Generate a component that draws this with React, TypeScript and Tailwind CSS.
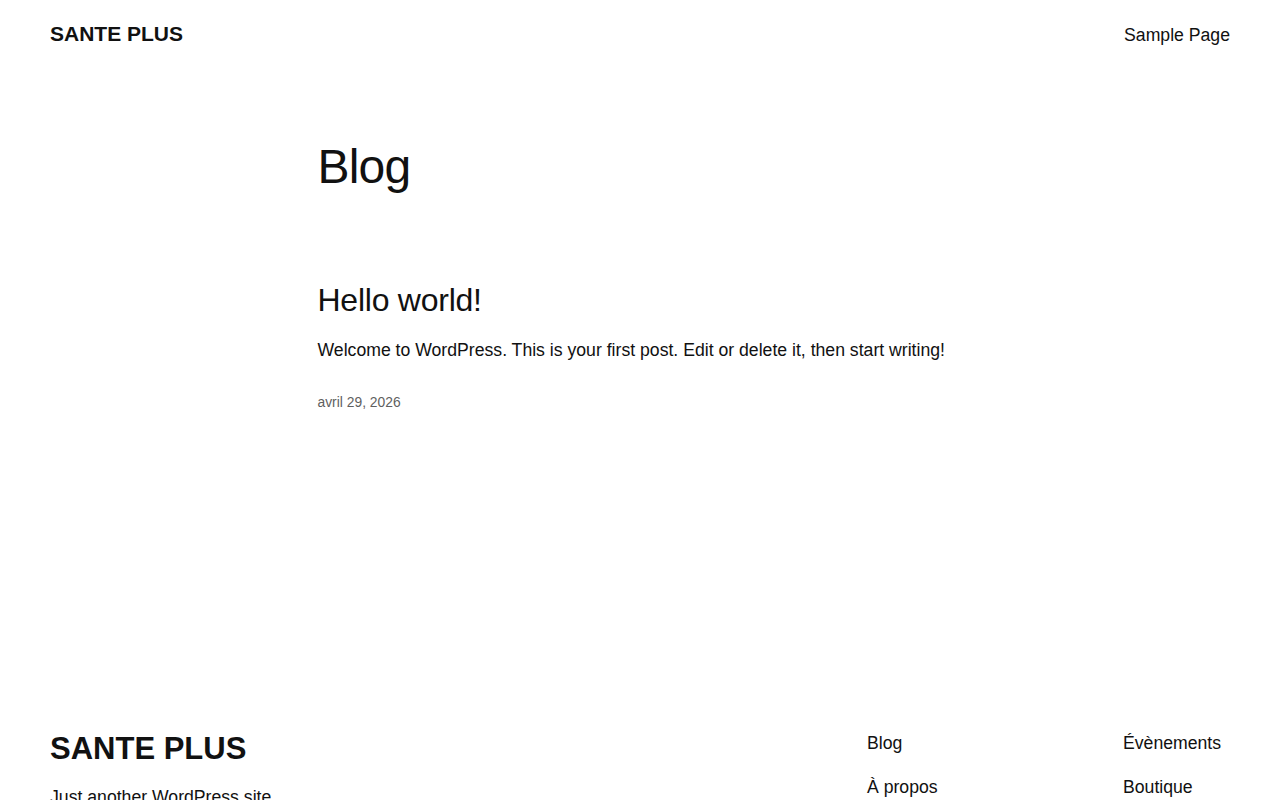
export default function App() {
  return (
    <div className="min-h-screen bg-white text-[#111111] font-['Liberation_Sans',Arial,sans-serif]">
      <header className="flex items-start justify-between px-[50px] pt-[20px]">
        <a href="#" className="text-[21px] font-bold leading-[28px]">
          SANTE PLUS
        </a>
        <nav className="pt-[1px]">
          <a href="#" className="text-[17.65px] leading-[28px]">
            Sample Page
          </a>
        </nav>
      </header>

      <main className="mx-auto w-[645px]">
        <h1 className="mt-[89px] text-[48px] leading-[58px] tracking-[-0.8px]">Blog</h1>

        <article className="mt-[84px]">
          <h2 className="text-[32px] leading-[40px] tracking-[-0.25px]">
            <a href="#">Hello world!</a>
          </h2>
          <p className="mt-[16px] text-[17.65px] leading-[28px]">
            Welcome to WordPress. This is your first post. Edit or delete it, then start writing!
          </p>
          <div className="mt-[28px] text-[13.85px] leading-[20px] text-[#5f5f5f]">avril 29, 2026</div>
        </article>
      </main>

      <footer className="mt-[315px] flex justify-between px-[50px]">
        <div>
          <a href="#" className="block pt-[2px] text-[31px] font-bold leading-[40px]">
            SANTE PLUS
          </a>
          <p className="mt-[14px] text-[17.65px] leading-[28px]">Just another WordPress site</p>
        </div>
        <div className="mt-[2px] flex w-[363px]">
          <ul className="flex w-[256px] flex-col gap-[16px] text-[17.65px] leading-[28px]">
            <li><a href="#">Blog</a></li>
            <li><a href="#">À propos</a></li>
            <li><a href="#">FAQs</a></li>
            <li><a href="#">Auteurs</a></li>
          </ul>
          <ul className="flex flex-col gap-[16px] text-[17.65px] leading-[28px]">
            <li><a href="#">Évènements</a></li>
            <li><a href="#">Boutique</a></li>
            <li><a href="#">Modèles</a></li>
            <li><a href="#">Thèmes</a></li>
          </ul>
        </div>
      </footer>
    </div>
  )
}
